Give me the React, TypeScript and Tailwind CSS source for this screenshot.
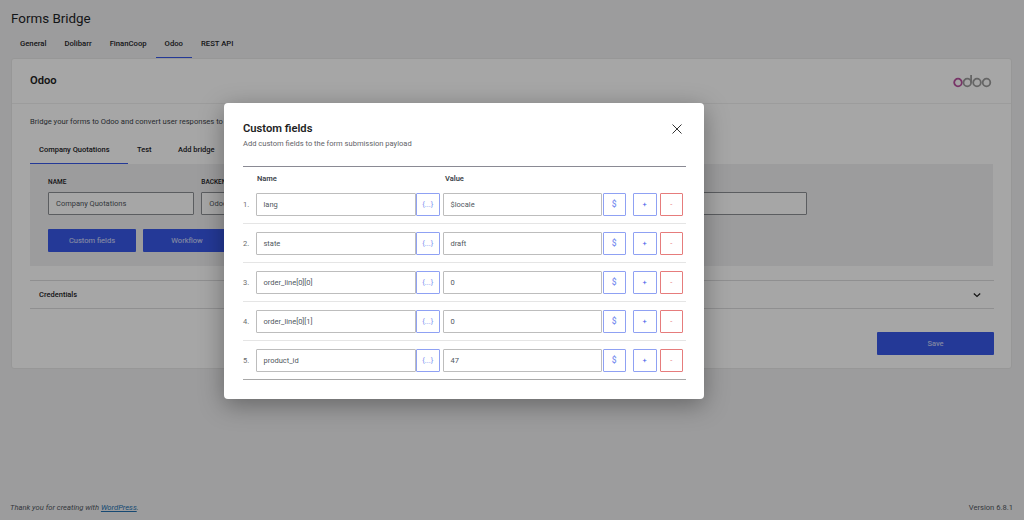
const fields = [
  { name: 'lang', value: '$locale' },
  { name: 'state', value: 'draft' },
  { name: 'order_line[0][0]', value: '0' },
  { name: 'order_line[0][1]', value: '0' },
  { name: 'product_id', value: '47' },
];

const pageTabs = ['General', 'Dolibarr', 'FinanCoop', 'Odoo', 'REST API'];

function OdooLogo() {
  return (
    <svg width="40" height="16" viewBox="0 0 40 16" fill="none" strokeWidth="1.8">
      <circle cx="5" cy="9.5" r="3.8" stroke="#b8509f" />
      <circle cx="14.3" cy="9.5" r="3.8" stroke="#9c9c9c" />
      <path d="M18.1 9.5V2" stroke="#9c9c9c" />
      <circle cx="24" cy="9.5" r="3.8" stroke="#9c9c9c" />
      <circle cx="33.5" cy="9.5" r="3.8" stroke="#9c9c9c" />
    </svg>
  );
}

function PageField({ label }: { label: string }) {
  return (
    <div className="w-[145.8px] shrink-0">
      <div className="h-[12px] text-[6.5px] leading-[12px] font-medium text-[#1d2327]">{label}</div>
      <div className="mt-[4px] flex h-[23px] items-center border border-[#8c8f94] rounded-[1px] bg-white px-[7px] text-[7.5px] text-[#50575e]">
        {label === 'NAME' ? 'Company Quotations' : label === 'BACKEND' ? 'Odoo' : ''}
      </div>
    </div>
  );
}

function SmallButton({ children, tone }: { children: React.ReactNode; tone: 'soft' | 'blue' | 'red' }) {
  const toneClass =
    tone === 'red'
      ? 'border-[#e67c7c] text-[#e67c7c]'
      : tone === 'blue'
        ? 'border-[#8fa1f3] text-[#3858e9]'
        : 'border-[#8fa1f3] text-[#7a8ff0]';
  return (
    <button className={`flex h-[23.5px] w-[23.5px] shrink-0 items-center justify-center rounded-[1px] border bg-white text-[7.5px] ${toneClass}`}>
      {children}
    </button>
  );
}

function TextBox({ value, width }: { value: string; width: string }) {
  return (
    <div className={`flex h-[23.5px] shrink-0 items-center rounded-[1px] border border-[#bdbdbd] bg-white px-[6.5px] text-[7.5px] text-[#50575e] ${width}`}>
      {value}
    </div>
  );
}

function Modal() {
  return (
    <div className="w-[480px] h-[295.5px] rounded-[4px] bg-white pl-[19px] pr-[18px] shadow-[0_6px_24px_rgba(0,0,0,0.35)]">
      <div className="flex h-[64px] items-start justify-between border-b border-[#8a8a94] pt-[19px]">
        <div>
          <h2 className="text-[11.2px] leading-[14px] font-semibold text-[#1e1e1e]">Custom fields</h2>
          <p className="mt-[2px] text-[7.55px] leading-[12px] text-[#5f6368]">Add custom fields to the form submission payload</p>
        </div>
        <svg className="mr-[3px] mt-[1px]" width="12" height="12" viewBox="0 0 12 12" stroke="#333" strokeWidth="1" fill="none">
          <path d="M1.5 1.5L10.5 10.5M10.5 1.5L1.5 10.5" />
        </svg>
      </div>
      <div className="flex h-[18px] pt-[7px] text-[7.5px] leading-[10px] font-semibold text-[#3c434a]">
        <span className="ml-[14px] w-[188px]">Name</span>
        <span>Value</span>
      </div>
      {fields.map((field, i) => (
        <div key={field.name} className={`flex h-[39px] items-start border-b pt-[7.5px] ${i < 4 ? 'border-[#e5e5e5]' : 'border-[#a8a8a8]'}`}>
          <span className="w-[13px] shrink-0 pt-[6px] text-[7.5px] leading-[12px] text-[#6b6b6b]">{i + 1}.</span>
          <TextBox value={field.name} width="w-[160px]" />
          <SmallButton tone="soft">{'{...}'}</SmallButton>
          <div className="ml-[3.5px]">
            <TextBox value={field.value} width="w-[158.5px]" />
          </div>
          <div className="ml-[1px]">
            <SmallButton tone="soft">
              <span className="text-[8.5px] font-medium">$</span>
            </SmallButton>
          </div>
          <div className="ml-[7px] flex gap-[3px]">
            <SmallButton tone="blue">+</SmallButton>
            <SmallButton tone="red">-</SmallButton>
          </div>
        </div>
      ))}
    </div>
  );
}

export default function App() {
  return (
    <div className="relative flex h-[520px] w-[1024px] flex-col overflow-hidden bg-[#f0f0f1] font-['Roboto',sans-serif]">
      <div className="flex-1 pl-[11px] pr-[12px]">
        <h1 className="pt-[10px] text-[13.4px] leading-[18px] text-[#1d2327]">Forms Bridge</h1>

        <div className="mt-[2px] flex h-[28px] text-[7.7px] font-medium text-[#1d2327]">
          {pageTabs.map((tab) => (
            <div
              key={tab}
              className={`flex h-[28px] items-center px-[9px] ${tab === 'Odoo' ? 'border-b border-[#3858e9]' : ''}`}
            >
              {tab}
            </div>
          ))}
        </div>

        <div className="h-[311px] rounded-[3px] border border-[#e8e8e8] bg-white">
          <div className="flex h-[45px] items-center justify-between border-b border-[#f0f0f0] pl-[18px] pr-[18px]">
            <span className="text-[11.2px] font-semibold text-[#1e1e1e]">Odoo</span>
            <OdooLogo />
          </div>

          <div className="pl-[18px] pr-[17px]">
            <p className="mt-[12px] text-[7.6px] leading-[12px] text-[#3c434a]">
              Bridge your forms to Odoo and convert user responses to
            </p>

            <div className="mt-[8px] flex h-[28px] items-center text-[7.5px] font-medium text-[#1d2327]">
              <div className="flex h-[28px] w-[98px] items-center border-b-[1.5px] border-[#3858e9] pl-[9px]">Company Quotations</div>
              <div className="w-[41px] pl-[9px]">Test</div>
              <div className="pl-[9px]">Add bridge</div>
            </div>

            <div className="mr-[1px] h-[102px] bg-[#f0f0f1] px-[18px] pt-[12px]">
              <div className="flex gap-[7.5px]">
                <PageField label="NAME" />
                <PageField label="BACKEND" />
                <PageField label="" />
                <PageField label="" />
                <PageField label="" />
              </div>
              <div className="mt-[14px] flex gap-[7px] text-[7.5px] text-white/80">
                <div className="flex h-[23px] w-[88px] items-center justify-center rounded-[1px] bg-[#3858e9]">Custom fields</div>
                <div className="flex h-[23px] w-[88px] items-center justify-center rounded-[1px] bg-[#3858e9]">Workflow</div>
              </div>
            </div>

            <div className="mt-[14px] flex h-[29px] items-center justify-between border-y border-[#dcdcde] pl-[9px] pr-[12px] text-[7.5px] font-medium text-[#1d2327]">
              <span>Credentials</span>
              <svg width="10" height="10" viewBox="0 0 10 10" fill="none" stroke="#1e1e1e" strokeWidth="1.2">
                <path d="M1.8 3.5L5 6.5L8.2 3.5" />
              </svg>
            </div>

            <div className="mt-[23px] flex justify-end">
              <div className="flex h-[23px] w-[117px] items-center justify-center rounded-[1px] bg-[#3858e9] text-[7.5px] font-medium text-white/70">Save</div>
            </div>
          </div>
        </div>
      </div>

      <div className="flex h-[18px] items-start justify-between pl-[10px] pr-[11px] text-[7.6px] leading-[12px] text-[#50575e]">
        <span className="italic">
          Thank you for creating with <span className="text-[#2271b1] underline">WordPress</span>.
        </span>
        <span>Version 6.8.1</span>
      </div>

      <div className="absolute inset-0 bg-black/35" />
      <div className="absolute left-[224px] top-[103px]">
        <Modal />
      </div>
    </div>
  );
}
